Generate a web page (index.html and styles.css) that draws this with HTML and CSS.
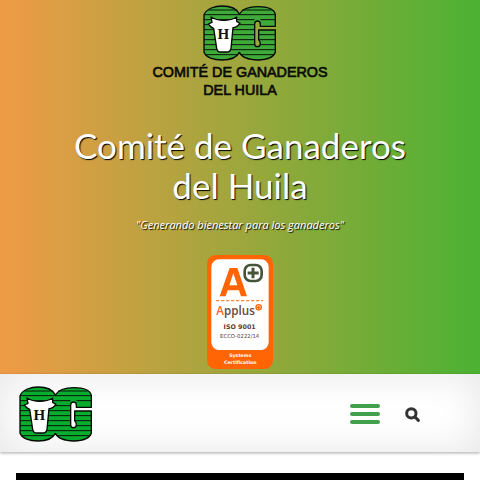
FILE: index.html
```
<!DOCTYPE html>
<html lang="es">
<head>
<meta charset="utf-8">
<meta name="viewport" content="width=device-width, initial-scale=1">
<title>Comité de Ganaderos del Huila</title>
<link rel="stylesheet" href="styles.css">
</head>
<body>
<svg class="defs" aria-hidden="true">
  <symbol id="emblem" viewBox="0 0 222 168">
    <path class="emblem-body" d="M3 30C9 10 38 3 57 3C80 3 101 10 109 27C118 11 141 5 165 5C192 5 213 13 217 28V64H172V57Q172 48 163 48Q155 48 155 57V116Q155 125 163 125Q172 125 172 116Q172 109 167 104V75H217V142C211 158 190 165 165 165C139 165 116 157 109 142C101 158 81 165 57 165C33 165 8 158 3 141Z"/>
    <path class="emblem-lines" d="M16 15H100M118 15H206M4 29H217M3 44H154M172 44H217M3 59H154M3 74H154M3 89H154M167 89H217M3 104H154M167 104H217M3 119H154M173 119H217M3 134H217M6 149H104M114 149H213"/>
    <path class="emblem-cow" d="M24 36Q40 46 62 46Q86 46 101 36L101 49L111 55Q101 68 90 68L84 130Q82 141 72 141H52Q43 141 41 130L32 70Q24 68 16 57L27 52Z"/>
  </symbol>
</svg>
<header class="hero">
  <svg class="hero-logo" viewBox="0 0 540 282" role="img" aria-label="Comité de Ganaderos del Huila">
    <use href="#emblem" x="159" y="0" width="222" height="168"/>
    <text class="emblem-letter" x="220" y="102">H</text>
    <text class="logo-name" x="270" y="217">COMITÉ DE GANADEROS</text>
    <text class="logo-name" x="270" y="270">DEL HUILA</text>
  </svg>
  <h1>Comité de Ganaderos del Huila</h1>
  <p class="tagline">"Generando bienestar para los ganaderos"</p>
  <svg class="seal" viewBox="0 0 198 342" role="img" aria-label="Applus ISO 9001">
    <rect class="orange" width="198" height="342" rx="26"/>
    <rect class="white" x="13" y="13" width="172" height="272" rx="23"/>
    <path class="orange" fill-rule="evenodd" d="M38 124L68 39H91L120 124H102L96 106H62L56 124ZM67 91H91L79 55Z"/>
    <rect class="plus-box" x="113" y="30" width="51" height="48" rx="18"/>
    <path class="plus-sign" d="M138 38V70M122 54H155"/>
    <path class="dashes" d="M27 137H168"/>
    <text class="brand" x="28" y="181"><tspan class="brand-a">A</tspan>pplus</text>
    <circle class="brand-plus" cx="155" cy="157" r="8"/>
    <path class="brand-plus" d="M155 152V162M150 157H160"/>
    <text class="iso" x="98" y="223">ISO 9001</text>
    <text class="code" x="98" y="250">ECCO-0222/14</text>
    <text class="systems" x="100" y="307">Systems</text>
    <text class="systems" x="100" y="327">Certification</text>
  </svg>
</header>
<nav class="bar" aria-label="Principal">
  <a class="brand-link" href="#" aria-label="Inicio">
    <svg viewBox="0 0 222 168">
      <use href="#emblem"/>
      <text class="emblem-letter" x="61" y="102">H</text>
    </svg>
  </a>
  <div class="actions">
    <button class="menu" type="button" aria-label="Menú"><span></span><span></span><span></span></button>
    <button class="search" type="button" aria-label="Buscar">
      <svg viewBox="0 0 45 45"><circle cx="19" cy="19" r="14"/><path d="M30 30L40 40"/></svg>
    </button>
  </div>
</nav>
<main><div class="slider"></div></main>
</body>
</html>
```
FILE: styles.css
```
* { box-sizing: border-box; }
body { margin: 0; background: #fff; font-family: "Open Sans", sans-serif; overflow-x: hidden; }
.defs { position: absolute; width: 0; height: 0; }
.hero {
  display: flex;
  flex-direction: column;
  align-items: center;
  padding: 5px 16px;
  background: linear-gradient(90deg, #f09b46, #4bb233);
}
.hero-logo { width: 180px; height: 94px; color: #3faa3a; }
.emblem-body { fill: currentColor; stroke: #050805; stroke-width: 4; stroke-linejoin: round; }
.emblem-lines { fill: none; stroke: #071507; stroke-width: 3; }
.emblem-cow { fill: #fff; stroke: #050805; stroke-width: 4; stroke-linejoin: round; }
.emblem-letter { font: bold 45px "Liberation Serif", serif; fill: #111; text-anchor: middle; }
.logo-name { font: 43px "Liberation Sans", sans-serif; fill: #0b0b08; stroke: #0b0b08; stroke-width: 2; text-anchor: middle; }
h1 {
  max-width: 360px;
  margin: 26px 0 0;
  color: #fff;
  font: 400 35px/40px Lato, sans-serif;
  text-align: center;
  text-shadow: 1px 1px 1px #000;
}
.tagline {
  margin: 12px 0 0;
  color: #fff;
  font-size: 11px;
  font-style: italic;
  line-height: 16px;
  text-shadow: 1px 1px 1px #000;
}
.seal { width: 66px; height: 114px; margin-top: 22px; }
.orange { fill: #ff6505; }
.white { fill: #fff; }
.plus-box { fill: #fff; stroke: #46543a; stroke-width: 8; }
.plus-sign { stroke: #46543a; stroke-width: 9; }
.dashes { stroke: #ff8640; stroke-width: 4; stroke-dasharray: 10 5; }
.brand { font: 600 35px "Open Sans", sans-serif; fill: #6b4545; }
.brand-a { fill: #f26a25; }
.brand-plus { fill: none; stroke: #ff6505; stroke-width: 4; }
.iso { font: bold 19px "DejaVu Sans", sans-serif; fill: #5b4038; text-anchor: middle; }
.code { font: 16px "DejaVu Sans", sans-serif; fill: #5b4038; text-anchor: middle; }
.systems { font: bold 14px "DejaVu Sans", sans-serif; fill: #fff; text-anchor: middle; }
.bar {
  display: flex;
  align-items: center;
  justify-content: space-between;
  padding: 12px 60px 10px 19px;
  background: #fff;
  box-shadow: inset 0 0 40px rgba(0, 0, 0, .1), 0 1px 3px rgba(0, 0, 0, .35);
}
.brand-link { color: #08ad30; }
.brand-link svg { display: block; width: 74px; height: 56px; }
.actions { display: flex; align-items: center; gap: 25px; }
button { padding: 0; border: 0; background: none; cursor: pointer; }
.menu { display: grid; gap: 4px; width: 30px; }
.menu span { height: 4px; border-radius: 2px; background: #40a04c; }
.search svg { display: block; width: 15px; height: 15px; fill: none; stroke: #333; stroke-width: 9; stroke-linecap: round; }
main { padding: 21px 16px 0; }
.slider { height: 7px; background: #000; }
```
